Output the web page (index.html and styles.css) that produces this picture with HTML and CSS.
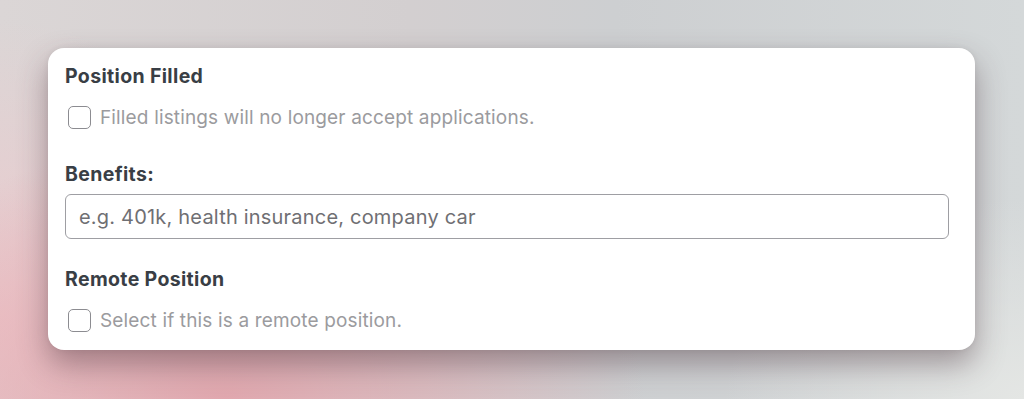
FILE: index.html
```html
<!DOCTYPE html>
<html lang="en">
  <head>
    <meta charset="UTF-8" />
    <meta name="viewport" content="width=device-width, initial-scale=1.0" />
    <title>Job Listing Fields</title>
    <link rel="stylesheet" href="styles.css">
  </head>
  <body>
    <div class="listing-box">
      <div class="field field-check">
        <div class="field-label">Position Filled</div>
        <label class="check-row">
          <input type="checkbox" id="filled" />
          <span>Filled listings will no longer accept applications.</span>
        </label>
      </div>

      <div class="field field-text">
        <label class="field-label" for="benefits">Benefits:</label>
        <input type="text" id="benefits" placeholder="e.g. 401k, health insurance, company car" />
      </div>

      <div class="field field-check last">
        <div class="field-label">Remote Position</div>
        <label class="check-row">
          <input type="checkbox" id="remote" />
          <span>Select if this is a remote position.</span>
        </label>
      </div>
    </div>
  </body>
</html>
```

FILE: styles.css
```css
body {
  font-family: Inter, "Noto Sans", sans-serif;
  margin: 0;
  padding: 48px;
  height: 399px;
  box-sizing: border-box;
  background:
    radial-gradient(ellipse 420px 260px at 22% 100%, rgba(226, 160, 168, 0.85), rgba(226, 160, 168, 0) 100%),
    radial-gradient(ellipse 260px 300px at 0% 80%, rgba(238, 200, 204, 0.9), rgba(238, 200, 204, 0) 100%),
    radial-gradient(ellipse 300px 200px at 100% 100%, rgba(228, 230, 228, 1), rgba(228, 230, 228, 0) 100%),
    linear-gradient(90deg, #dbd6d6 0%, #d3cfd0 40%, #cdcfd1 60%, #d4d8d9 100%);
}

.listing-box {
  background: white;
  border-radius: 16px;
  box-shadow: 0 14px 30px rgba(70, 45, 55, 0.42), 0 0 6px rgba(0, 0, 0, 0.06);
  width: 927px;
  box-sizing: border-box;
  padding: 18px 26px 18px 17px;
}

.field {
  margin-bottom: 35px;
}

.field-text {
  margin-bottom: 30px;
}

.field.last {
  margin-bottom: 0;
}

.field-label {
  display: block;
  font-size: 19.5px;
  line-height: 20px;
  font-weight: 650;
  letter-spacing: 0.35px;
  color: #393e45;
}

.field-check .field-label {
  margin-bottom: 19px;
}

.field-text .field-label {
  margin-bottom: 10px;
}

.check-row {
  display: flex;
  align-items: center;
  gap: 9px;
  height: 24px;
  padding-left: 3px;
  font-size: 19px;
  letter-spacing: 0.15px;
  color: #9b9b9e;
}

.check-row input {
  appearance: none;
  margin: 0;
  width: 23px;
  height: 23px;
  border: 1.5px solid #8c8c91;
  border-radius: 5px;
  background: white;
}

input[type="text"] {
  display: block;
  width: 100%;
  box-sizing: border-box;
  height: 45px;
  padding: 0 13px;
  border: 1px solid #9e9ea3;
  border-radius: 6px;
  font-family: inherit;
  font-size: 20px;
  letter-spacing: 0.2px;
  color: #333;
}

input[type="text"]::placeholder {
  color: #6f6f73;
}
```
